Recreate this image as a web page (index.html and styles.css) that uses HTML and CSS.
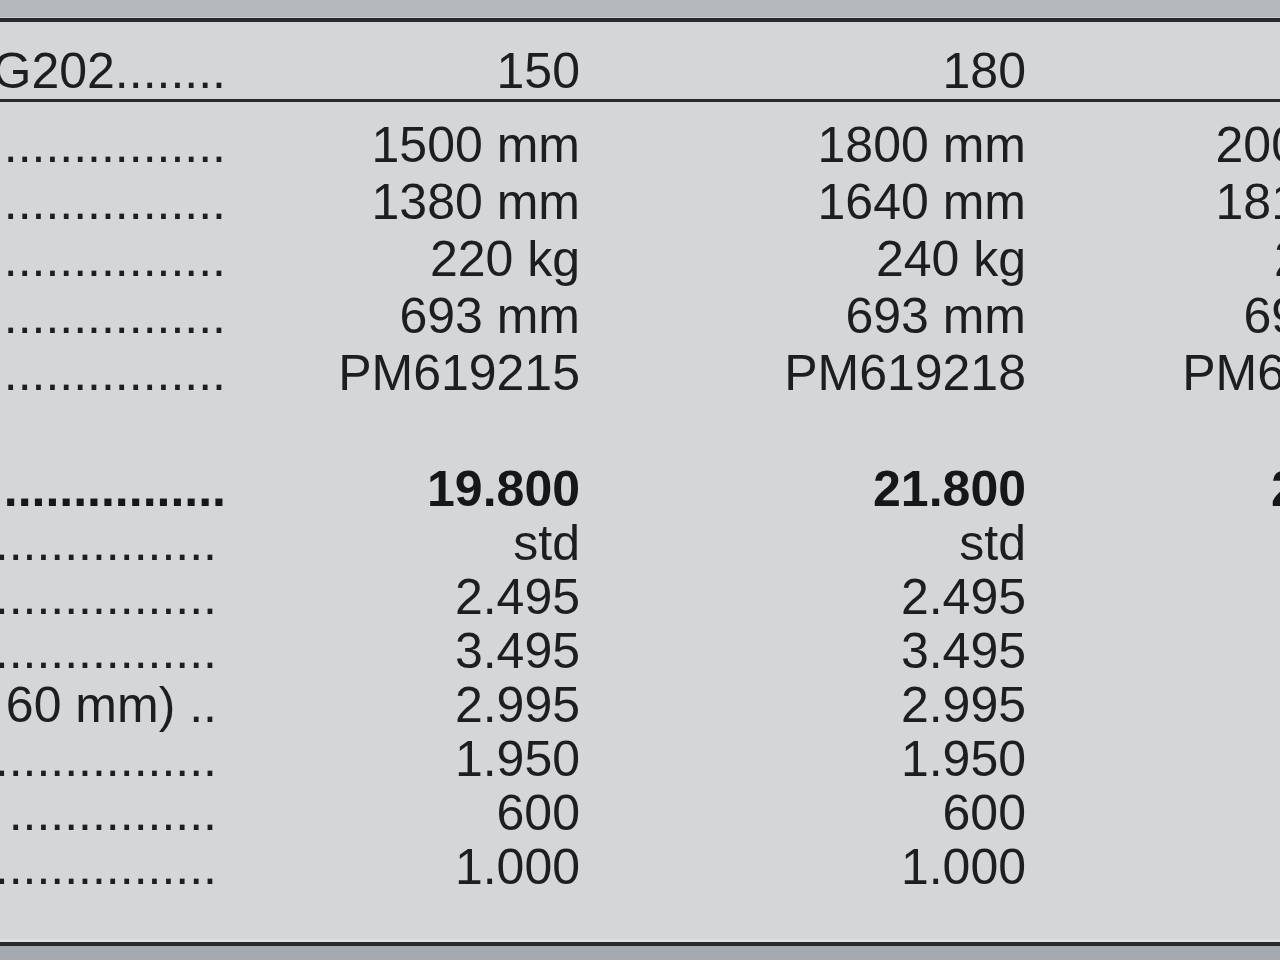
FILE: index.html
```html
<!DOCTYPE html>
<html lang="da">
<head>
<meta charset="utf-8">
<title>Prisliste G202</title>
<link rel="stylesheet" href="styles.css">
</head>
<body>
<div class="band-top"></div>
<div class="sheet">
  <div class="row head">
    <div class="lbl">G202........</div>
    <div class="val">150</div>
    <div class="val">180</div>
    <div class="val">200</div>
  </div>
  <div class="sec upper">
    <div class="row">
      <div class="lbl">................</div>
      <div class="val">1500 mm</div>
      <div class="val">1800 mm</div>
      <div class="val">2000 mm</div>
    </div>
    <div class="row">
      <div class="lbl">................</div>
      <div class="val">1380 mm</div>
      <div class="val">1640 mm</div>
      <div class="val">1810 mm</div>
    </div>
    <div class="row">
      <div class="lbl">................</div>
      <div class="val">220 kg</div>
      <div class="val">240 kg</div>
      <div class="val">260 kg</div>
    </div>
    <div class="row">
      <div class="lbl">................</div>
      <div class="val">693 mm</div>
      <div class="val">693 mm</div>
      <div class="val">693 mm</div>
    </div>
    <div class="row">
      <div class="lbl">................</div>
      <div class="val">PM619215</div>
      <div class="val">PM619218</div>
      <div class="val">PM619220</div>
    </div>
  </div>
  <div class="sec lower">
    <div class="row bold">
      <div class="lbl">................</div>
      <div class="val">19.800</div>
      <div class="val">21.800</div>
      <div class="val">23.800</div>
    </div>
    <div class="row">
      <div class="lbl inset">................</div>
      <div class="val">std</div>
      <div class="val">std</div>
      <div class="val">std</div>
    </div>
    <div class="row">
      <div class="lbl inset">................</div>
      <div class="val">2.495</div>
      <div class="val">2.495</div>
      <div class="val">2.495</div>
    </div>
    <div class="row">
      <div class="lbl inset">................</div>
      <div class="val">3.495</div>
      <div class="val">3.495</div>
      <div class="val">3.495</div>
    </div>
    <div class="row">
      <div class="lbl inset">60 mm) ..</div>
      <div class="val">2.995</div>
      <div class="val">2.995</div>
      <div class="val">2.995</div>
    </div>
    <div class="row">
      <div class="lbl inset">................</div>
      <div class="val">1.950</div>
      <div class="val">1.950</div>
      <div class="val">1.950</div>
    </div>
    <div class="row">
      <div class="lbl inset">...............</div>
      <div class="val">600</div>
      <div class="val">600</div>
      <div class="val">600</div>
    </div>
    <div class="row">
      <div class="lbl inset">................</div>
      <div class="val">1.000</div>
      <div class="val">1.000</div>
      <div class="val">1.000</div>
    </div>
  </div>
</div>
<div class="band-bottom"></div>
</body>
</html>
```

FILE: styles.css
```css
html, body {
  margin: 0;
  padding: 0;
  height: 960px;
  overflow: hidden;
}

body {
  background: #d4d6d8;
  color: #1d1e1f;
  font-family: "Liberation Sans", Arial, Helvetica, sans-serif;
  font-size: 50px;
  display: flex;
  flex-direction: column;
}

.band-top {
  height: 17px;
  background: #b4b9bd;
  border-bottom: 1px solid #c9cdd0;
  flex: none;
}

.sheet {
  flex: none;
  margin-left: -40px;
  width: 1464px;
  border-top: 4px solid #27292c;
  border-bottom: 4px solid #27292c;
  box-shadow: 0 -4px 0 -1px #dcdee0 inset;
}

.row {
  display: grid;
  grid-template-columns: 266px 354px 446px 398px;
  white-space: nowrap;
}

.lbl,
.val {
  text-align: right;
  overflow: visible;
}

.lbl.inset {
  padding-right: 9px;
}

.head {
  padding-top: 21px;
  line-height: 56px;
  border-bottom: 3px solid #27292c;
}

.upper {
  padding-top: 15px;
  line-height: 57px;
}

.lower {
  padding-top: 60px;
  padding-bottom: 48px;
  line-height: 54px;
}

.bold {
  font-weight: bold;
  color: #161718;
}

.band-bottom {
  flex: 1;
  background: #a5aab0;
}
```
